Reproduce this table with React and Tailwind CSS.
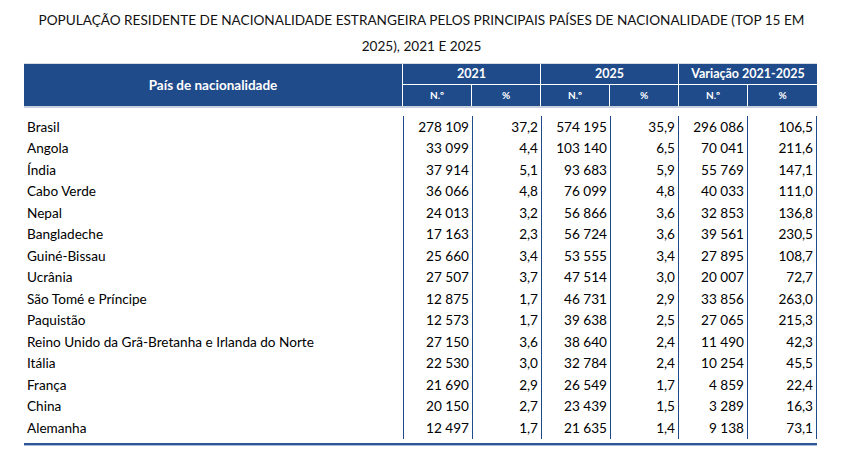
import React from "react";

const rows = [
  ["Brasil", "278 109", "37,2", "574 195", "35,9", "296 086", "106,5"],
  ["Angola", "33 099", "4,4", "103 140", "6,5", "70 041", "211,6"],
  ["Índia", "37 914", "5,1", "93 683", "5,9", "55 769", "147,1"],
  ["Cabo Verde", "36 066", "4,8", "76 099", "4,8", "40 033", "111,0"],
  ["Nepal", "24 013", "3,2", "56 866", "3,6", "32 853", "136,8"],
  ["Bangladeche", "17 163", "2,3", "56 724", "3,6", "39 561", "230,5"],
  ["Guiné-Bissau", "25 660", "3,4", "53 555", "3,4", "27 895", "108,7"],
  ["Ucrânia", "27 507", "3,7", "47 514", "3,0", "20 007", "72,7"],
  ["São Tomé e Príncipe", "12 875", "1,7", "46 731", "2,9", "33 856", "263,0"],
  ["Paquistão", "12 573", "1,7", "39 638", "2,5", "27 065", "215,3"],
  ["Reino Unido da Grã-Bretanha e Irlanda do Norte", "27 150", "3,6", "38 640", "2,4", "11 490", "42,3"],
  ["Itália", "22 530", "3,0", "32 784", "2,4", "10 254", "45,5"],
  ["França", "21 690", "2,9", "26 549", "1,7", "4 859", "22,4"],
  ["China", "20 150", "2,7", "23 439", "1,5", "3 289", "16,3"],
  ["Alemanha", "12 497", "1,7", "21 635", "1,4", "9 138", "73,1"],
];

// widths of the numeric columns (each carries its own left rule)
const colWidths = ["w-[69px]", "w-[69px]", "w-[69px]", "w-[68px]", "w-[69px]", "w-[70px] border-r"];

function HeaderCell({ className = "", children }) {
  return (
    <div className={`bg-[#1f4b8a] text-white font-bold flex items-center justify-center ${className}`}>
      {children}
    </div>
  );
}

export default function App() {
  return (
    <div className="w-[843px] h-[475px] bg-white text-black overflow-hidden" style={{ fontFamily: "Lato, 'Liberation Sans', sans-serif" }}>
      <h1 className="pt-[7px] text-center text-[13.6px] leading-[26px] font-normal text-[#111]">
        POPULAÇÃO RESIDENTE DE NACIONALIDADE ESTRANGEIRA PELOS PRINCIPAIS PAÍSES DE NACIONALIDADE (TOP 15 EM
        <br />
        2025), 2021 E 2025
      </h1>

      <div className="ml-[24px] w-[793px] mt-[4px]">
        <div className="border-t border-[#d6dbe5] border-b-2 border-b-[#c7d1e2]">
          <div className="grid grid-cols-[378px_68px_68px_68px_68px_68px_69px] grid-rows-[20px_21px] gap-px bg-white">
            <HeaderCell className="row-span-2 text-[13.5px]">País de nacionalidade</HeaderCell>
            <HeaderCell className="col-span-2 text-[12.5px]">2021</HeaderCell>
            <HeaderCell className="col-span-2 text-[12.5px]">2025</HeaderCell>
            <HeaderCell className="col-span-2 text-[12.5px]">Variação 2021-2025</HeaderCell>
            {["N.º", "%", "N.º", "%", "N.º", "%"].map((t, i) => (
              <HeaderCell key={i} className="text-[10px]">{t}</HeaderCell>
            ))}
          </div>
        </div>

        <div className="mt-[5px] pt-[3px] pb-[1px] flex flex-col">
          {rows.map((r, i) => (
            <div key={i} className="flex text-[13.6px]">
              <div className="w-[379px] pl-[3px] h-[21.5px] flex items-center">{r[0]}</div>
              {r.slice(1).map((v, j) => (
                <div
                  key={j}
                  className={`${colWidths[j]} border-l border-[#1f4b8a] h-[21.5px] pr-[3px] flex items-center justify-end`}
                >
                  {v}
                </div>
              ))}
            </div>
          ))}
        </div>

        <div className="mt-[3px] h-[2px] bg-[#2f5597]" />
        <div className="h-px bg-[#a9bbdb]" />
      </div>
    </div>
  );
}
